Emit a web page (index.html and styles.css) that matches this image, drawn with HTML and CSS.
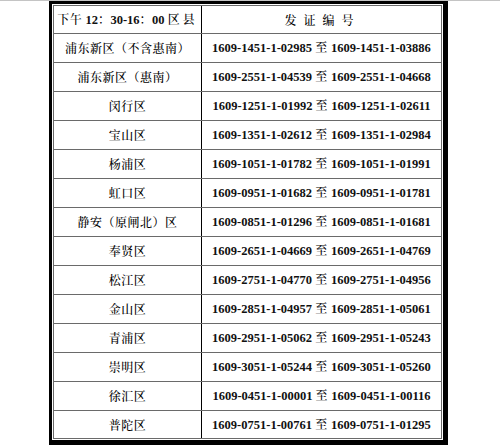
FILE: index.html
```html
<!DOCTYPE html>
<html lang="zh-CN">
<head>
<meta charset="utf-8">
<title>发证编号</title>
<link rel="stylesheet" href="styles.css">
</head>
<body>
<div class="page">
  <div class="frame">
    <div class="tbl">
      <div class="row head">
        <div class="c1"><span class="txt"><span class="zh">下午</span> <b>12</b><span class="zh">：</span><b>30-16</b><span class="zh">：</span><b>00</b> <span class="zh wide">区县</span></span></div>
        <div class="c2"><span class="zh title">发 证 编 号</span></div>
      </div>
      <div class="row"><div class="c1 zh">浦东新区（不含惠南）</div><div class="c2"><span class="txt"><b>1609-1451-1-02985</b> <span class="zh">至</span> <b>1609-1451-1-03886</b></span></div></div>
      <div class="row"><div class="c1 zh">浦东新区（惠南）</div><div class="c2"><span class="txt"><b>1609-2551-1-04539</b> <span class="zh">至</span> <b>1609-2551-1-04668</b></span></div></div>
      <div class="row"><div class="c1 zh">闵行区</div><div class="c2"><span class="txt"><b>1609-1251-1-01992</b> <span class="zh">至</span> <b>1609-1251-1-02611</b></span></div></div>
      <div class="row"><div class="c1 zh">宝山区</div><div class="c2"><span class="txt"><b>1609-1351-1-02612</b> <span class="zh">至</span> <b>1609-1351-1-02984</b></span></div></div>
      <div class="row"><div class="c1 zh">杨浦区</div><div class="c2"><span class="txt"><b>1609-1051-1-01782</b> <span class="zh">至</span> <b>1609-1051-1-01991</b></span></div></div>
      <div class="row"><div class="c1 zh">虹口区</div><div class="c2"><span class="txt"><b>1609-0951-1-01682</b> <span class="zh">至</span> <b>1609-0951-1-01781</b></span></div></div>
      <div class="row"><div class="c1 zh">静安（原闸北）区</div><div class="c2"><span class="txt"><b>1609-0851-1-01296</b> <span class="zh">至</span> <b>1609-0851-1-01681</b></span></div></div>
      <div class="row"><div class="c1 zh">奉贤区</div><div class="c2"><span class="txt"><b>1609-2651-1-04669</b> <span class="zh">至</span> <b>1609-2651-1-04769</b></span></div></div>
      <div class="row"><div class="c1 zh">松江区</div><div class="c2"><span class="txt"><b>1609-2751-1-04770</b> <span class="zh">至</span> <b>1609-2751-1-04956</b></span></div></div>
      <div class="row"><div class="c1 zh">金山区</div><div class="c2"><span class="txt"><b>1609-2851-1-04957</b> <span class="zh">至</span> <b>1609-2851-1-05061</b></span></div></div>
      <div class="row"><div class="c1 zh">青浦区</div><div class="c2"><span class="txt"><b>1609-2951-1-05062</b> <span class="zh">至</span> <b>1609-2951-1-05243</b></span></div></div>
      <div class="row"><div class="c1 zh">崇明区</div><div class="c2"><span class="txt"><b>1609-3051-1-05244</b> <span class="zh">至</span> <b>1609-3051-1-05260</b></span></div></div>
      <div class="row"><div class="c1 zh">徐汇区</div><div class="c2"><span class="txt"><b>1609-0451-1-00001</b> <span class="zh">至</span> <b>1609-0451-1-00116</b></span></div></div>
      <div class="row"><div class="c1 zh">普陀区</div><div class="c2"><span class="txt"><b>1609-0751-1-00761</b> <span class="zh">至</span> <b>1609-0751-1-01295</b></span></div></div>
    </div>
  </div>
</div>
</body>
</html>
```

FILE: styles.css
```css
html, body {
  margin: 0;
  padding: 0;
  background: #ffffff;
}

.page {
  border-top: 1px solid #c4c4c4;
  height: 446px;
  font-family: "Liberation Serif", "Noto Serif CJK SC", "Noto Sans CJK SC", serif;
  font-size: 12.5px;
  color: #111;
}

.frame {
  margin-left: 49px;
  width: 399px;
  box-sizing: border-box;
  border-style: solid;
  border-color: #000;
  border-width: 3px 5px 5px 3px;
  padding: 1px;
}

.tbl {
  border: 1px solid #6a6a6a;
}

.row {
  display: grid;
  grid-template-columns: 148px 1fr;
  height: 29px;
  box-sizing: border-box;
  border-bottom: 1px solid #6a6a6a;
}

.row.head {
  height: 28px;
}

.row:last-child {
  height: 27px;
  border-bottom: none;
}

.c1, .c2 {
  display: flex;
  align-items: center;
  justify-content: center;
  white-space: nowrap;
  line-height: 1;
}

.c1 {
  border-right: 1px solid #000;
}

.txt {
  white-space: pre;
}

b {
  font-weight: 700;
}

.zh {
  font-family: "Noto Serif CJK SC", "Noto Sans CJK SC", sans-serif;
  font-size: 12px;
  font-weight: 500;
  letter-spacing: 0.5px;
  color: #000;
}

.wide {
  letter-spacing: 3px;
}

.title {
  letter-spacing: 1px;
  word-spacing: 2px;
  margin-left: -4px;
}
```
